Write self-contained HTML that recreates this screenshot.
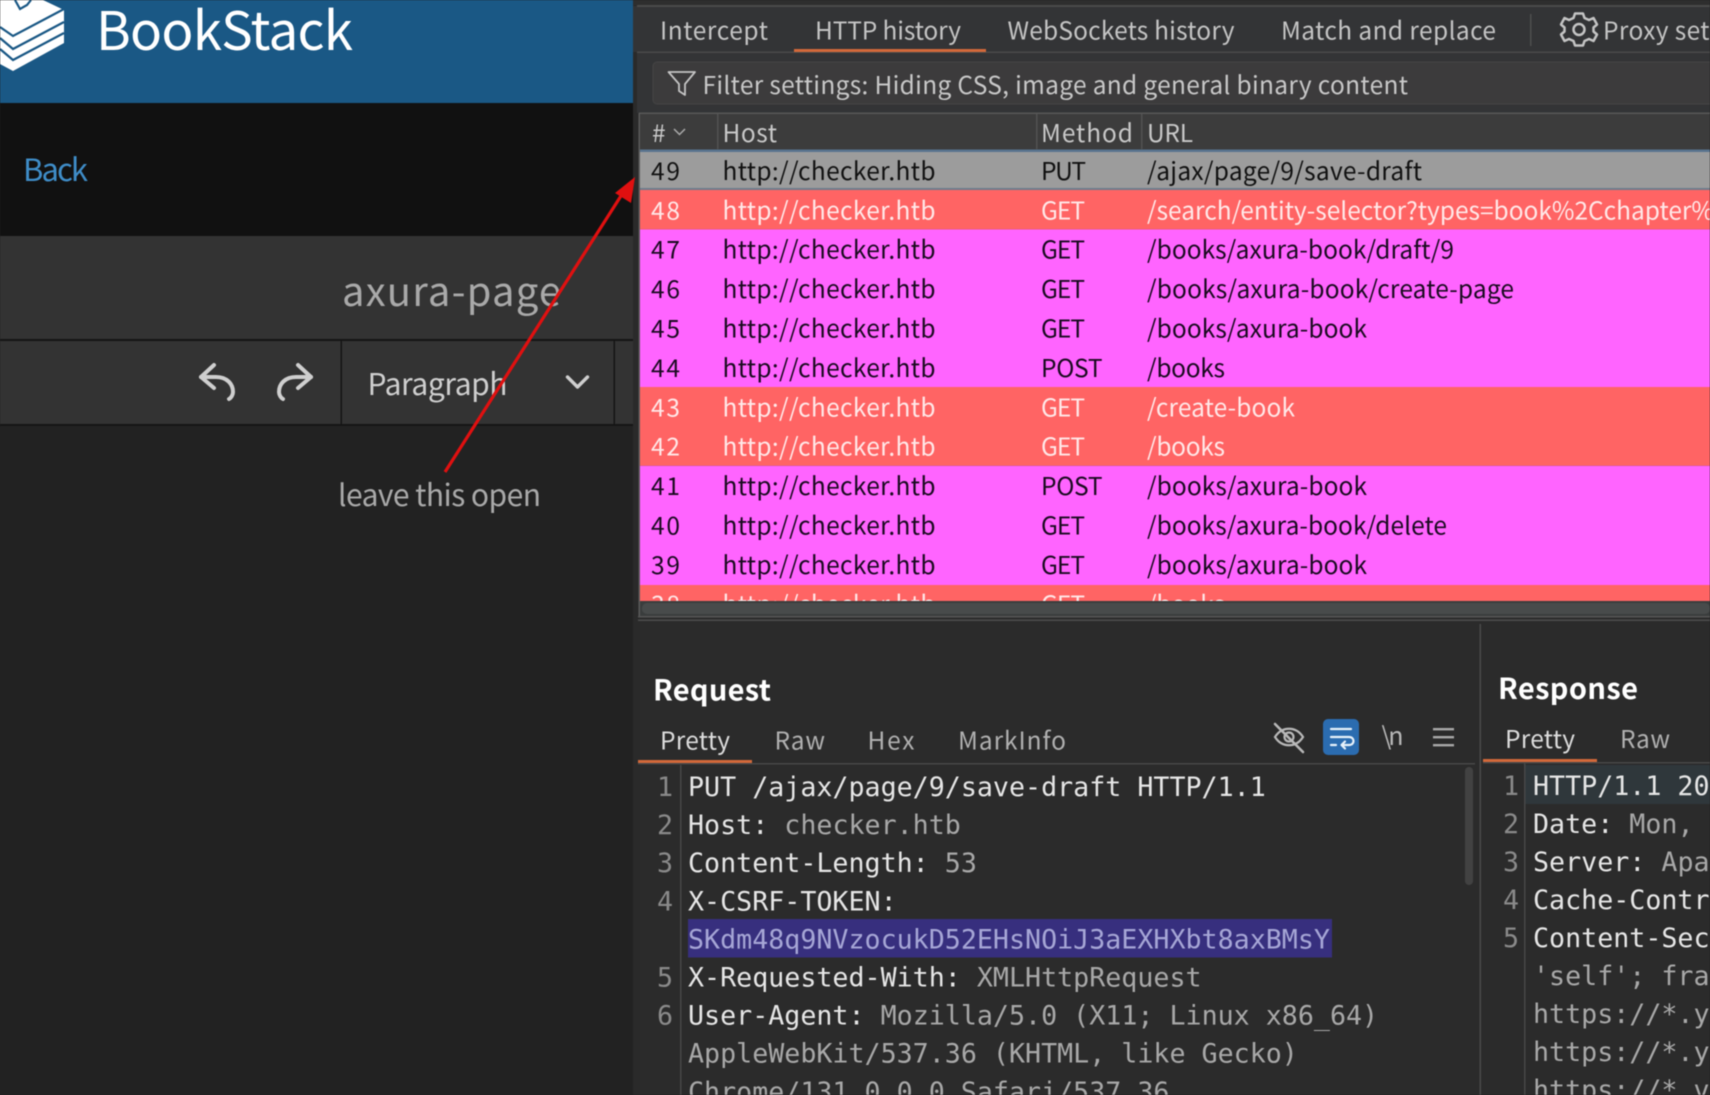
<!DOCTYPE html>
<html><head><meta charset="utf-8">
<style>
html,body{margin:0;padding:0;background:#222;width:1710px;height:1095px;overflow:hidden}
svg{display:block;filter:blur(.6px)}
text{font-family:"Noto Sans CJK SC","Liberation Sans",sans-serif;font-size:24.5px}
.m text,text.m{font-family:"DejaVu Sans Mono","Liberation Mono",monospace;font-size:26.67px}
.k{fill:#e6e6e6}.v{fill:#a8a8a8}.n{fill:#8a8a8a}
.b text{fill:#1a0a20}.w text{fill:#ffe8e8}
</style></head><body>
<svg width="1710" height="1095" viewBox="0 0 1710 1095" xmlns="http://www.w3.org/2000/svg">
<defs><clipPath id="c38"><rect x="640" y="584" width="1070" height="17"/></clipPath></defs>

<!-- left panel -->
<rect x="0" y="0" width="633" height="103" fill="#1a5885"/>
<rect x="0" y="103" width="633" height="133" fill="#111"/>
<rect x="0" y="236" width="633" height="103" fill="#333"/>
<rect x="0" y="339" width="633" height="2" fill="#151515"/>
<rect x="0" y="341" width="633" height="83" fill="#333"/>
<rect x="0" y="424" width="633" height="2" fill="#151515"/>
<rect x="0" y="426" width="633" height="669" fill="#222"/>
<rect x="340.500" y="341" width="1.500" height="83" fill="#151515"/>
<rect x="613.500" y="341" width="1.500" height="83" fill="#151515"/>

<!-- logo -->
<polygon points="0,0 43,0 64,10 64,43 13,71 0,64" fill="#fff"/>
<g fill="none" stroke="#1a5885" stroke-width="2.200">
<polyline points="0,27 13,36 64,9"/>
<polyline points="0,38 13,49 64,22"/>
<polyline points="0,49 13,60 64,33"/>
<polyline points="15,0 20,9 27,5 31,0"/>
</g>
<text x="96" y="50" textLength="257" style="font-size:53px" fill="#fff">BookStack</text>

<text x="23" y="181" textLength="65" style="font-size:31px" fill="#3f8dc8">Back</text>
<text x="342" y="306" textLength="219" style="font-size:40px" fill="#a9a9a9">axura-page</text>
<text x="367.500" y="395" textLength="140" style="font-size:30px" fill="#cfcfcf">Paragraph</text>
<text x="338" y="506" textLength="203" style="font-size:30px" fill="#a9a9a9">leave this open</text>

<!-- undo / redo / chevron -->
<g fill="none" stroke="#cfcfcf" stroke-width="4" stroke-linecap="round" stroke-linejoin="round">
<path d="M214 365 L201 377 L214 388"/>
<path d="M201 377 H216 C227 377 233 384 233 392 C233 395 231 398 229 399"/>
<path d="M298 365 L311 377 L298 388"/>
<path d="M311 377 H296 C285 377 279 384 279 392 C279 395 281 398 283 399"/>
<path d="M567.500 377 L577.500 387 L587.500 377" stroke-width="3.400"/>
</g>

<!-- right panel base -->
<rect x="633" y="0" width="1077" height="1095" fill="#2b2b2b"/>
<rect x="633" y="0" width="7" height="1095" fill="#2a2a2a"/>
<rect x="633" y="6" width="1077" height="46" fill="#333436"/>
<rect x="633" y="0" width="1077" height="5" fill="#2e2e2e"/>
<rect x="637" y="5" width="1073" height="2" fill="#4a4a4a"/>
<rect x="637" y="51.500" width="1073" height="2" fill="#4a4a4a"/>
<rect x="637" y="53" width="1073" height="60" fill="#333436"/>

<text x="660" y="39.500" textLength="108" fill="#c4c4c4">Intercept</text>
<text x="815" y="39.500" textLength="146" fill="#c4c4c4">HTTP history</text>
<text x="1007.500" y="39.500" textLength="227" fill="#c4c4c4">WebSockets history</text>
<text x="1281" y="39.500" textLength="215" fill="#c4c4c4">Match and replace</text>
<rect x="794" y="49" width="192" height="3" fill="#d2683a"/>
<rect x="1530" y="14" width="1.500" height="32" fill="#4e4e4e"/>
<!-- gear -->
<g fill="none" stroke="#c4c4c4" stroke-width="2.500" stroke-linejoin="round">
<path d="M1575 13.500 H1583 L1584.500 18 L1589 20 L1593.500 18 L1597 24.500 L1593.500 27.500 V31.500 L1597 34.500 L1593.500 41 L1589 39 L1584.500 41 L1583 45.500 H1575 L1573.500 41 L1569 39 L1564.500 41 L1561 34.500 L1564.500 31.500 V27.500 L1561 24.500 L1564.500 18 L1569 20 L1573.500 18 Z"/>
<circle cx="1579" cy="29.500" r="5.500"/>
</g>
<text x="1603" y="39.500" textLength="164" fill="#c4c4c4">Proxy settings</text>

<!-- filter -->
<rect x="653" y="62" width="1060" height="42" rx="4" fill="#3c3b3c" stroke="#454545"/>
<path d="M668.500 72 H695 L685 84 V95 L679 91 V84 Z" fill="none" stroke="#c4c4c4" stroke-width="1.800" stroke-linejoin="round"/>
<text x="702.500" y="94" textLength="705.500" fill="#c8c8c8">Filter settings: Hiding CSS, image and general binary content</text>

<!-- table header -->
<rect x="639" y="112.500" width="1071" height="37" fill="#3c3c3c"/>
<rect x="639" y="112.500" width="1071" height="1.500" fill="#575757"/>
<rect x="717" y="114" width="1.500" height="35" fill="#525252"/>
<rect x="1036" y="114" width="1.500" height="35" fill="#525252"/>
<rect x="1141" y="114" width="1.500" height="35" fill="#525252"/>
<text x="652" y="142" textLength="15" fill="#c8c8c8">#</text>
<path d="M674 129 L679.500 134.500 L685 129" fill="none" stroke="#aaa" stroke-width="1.500"/>
<text x="722.500" y="142" textLength="54.500" fill="#c8c8c8">Host</text>
<text x="1041" y="142" textLength="92" fill="#c8c8c8">Method</text>
<text x="1147" y="142" textLength="46" fill="#c8c8c8">URL</text>

<!-- rows -->
<rect x="640" y="149.500" width="1070" height="2.500" fill="#59748f"/>
<rect x="640" y="152" width="1070" height="36" fill="#9c9c9c"/>
<rect x="640" y="188" width="1070" height="2" fill="#6e7c8c"/>
<rect x="640" y="190" width="1070" height="39.400" fill="#ff6464"/>
<rect x="640" y="229.400" width="1070" height="157.600" fill="#ff64ff"/>
<rect x="640" y="387" width="1070" height="78.800" fill="#ff6464"/>
<rect x="640" y="465.800" width="1070" height="119.200" fill="#ff64ff"/>
<rect x="640" y="585" width="1070" height="16" fill="#ff6464"/>

<g fill="#111">
<text x="651" y="180" textLength="29">49</text><text x="722.500" y="180" textLength="213">http://checker.htb</text><text x="1041" y="180" textLength="45">PUT</text><text x="1147" y="180" textLength="275">/ajax/page/9/save-draft</text>
</g>
<g class="w">
<text x="651" y="219.300" textLength="29">48</text><text x="722.500" y="219.300" textLength="213">http://checker.htb</text><text x="1041" y="219.300" textLength="44">GET</text><text x="1147" y="219.300" textLength="567">/search/entity-selector?types=book%2Cchapter%</text>
</g>
<g class="b">
<text x="651" y="258.700" textLength="29">47</text><text x="722.500" y="258.700" textLength="213">http://checker.htb</text><text x="1041" y="258.700" textLength="44">GET</text><text x="1147" y="258.700" textLength="307">/books/axura-book/draft/9</text>
<text x="651" y="298.100" textLength="29">46</text><text x="722.500" y="298.100" textLength="213">http://checker.htb</text><text x="1041" y="298.100" textLength="44">GET</text><text x="1147" y="298.100" textLength="367">/books/axura-book/create-page</text>
<text x="651" y="337.500" textLength="29">45</text><text x="722.500" y="337.500" textLength="213">http://checker.htb</text><text x="1041" y="337.500" textLength="44">GET</text><text x="1147" y="337.500" textLength="220">/books/axura-book</text>
<text x="651" y="376.900" textLength="29">44</text><text x="722.500" y="376.900" textLength="213">http://checker.htb</text><text x="1041" y="376.900" textLength="61.500">POST</text><text x="1147" y="376.900" textLength="78">/books</text>
</g>
<g class="w">
<text x="651" y="416.300" textLength="29">43</text><text x="722.500" y="416.300" textLength="213">http://checker.htb</text><text x="1041" y="416.300" textLength="44">GET</text><text x="1147" y="416.300" textLength="148">/create-book</text>
<text x="651" y="455.700" textLength="29">42</text><text x="722.500" y="455.700" textLength="213">http://checker.htb</text><text x="1041" y="455.700" textLength="44">GET</text><text x="1147" y="455.700" textLength="78">/books</text>
</g>
<g class="b">
<text x="651" y="495.100" textLength="29">41</text><text x="722.500" y="495.100" textLength="213">http://checker.htb</text><text x="1041" y="495.100" textLength="61.500">POST</text><text x="1147" y="495.100" textLength="220">/books/axura-book</text>
<text x="651" y="534.500" textLength="29">40</text><text x="722.500" y="534.500" textLength="213">http://checker.htb</text><text x="1041" y="534.500" textLength="44">GET</text><text x="1147" y="534.500" textLength="300">/books/axura-book/delete</text>
<text x="651" y="573.900" textLength="29">39</text><text x="722.500" y="573.900" textLength="213">http://checker.htb</text><text x="1041" y="573.900" textLength="44">GET</text><text x="1147" y="573.900" textLength="220">/books/axura-book</text>
</g>
<g class="w" clip-path="url(#c38)">
<text x="651" y="613.300" textLength="29">38</text><text x="722.500" y="613.300" textLength="213">http://checker.htb</text><text x="1041" y="613.300" textLength="44">GET</text><text x="1147" y="613.300" textLength="78">/books</text>
</g>

<!-- table bottom scrollbar -->
<rect x="640" y="601" width="1070" height="15" fill="#3a3d3d"/>
<rect x="642" y="603" width="1068" height="11" rx="5" fill="#484b4b"/>
<rect x="638.500" y="113" width="1.500" height="504" fill="#5a5a5a"/>
<rect x="638" y="616" width="1072" height="1.500" fill="#555"/>
<rect x="638" y="619.500" width="1072" height="1.500" fill="#4c4c4c"/>

<!-- request header -->
<rect x="1479.500" y="624" width="1.500" height="471" fill="#4a4a4a"/>
<text x="653" y="700.500" textLength="118" style="font-size:29px;font-weight:700" fill="#fff">Request</text>
<text x="660" y="749.500" textLength="70" fill="#dcdcdc">Pretty</text>
<text x="774.500" y="749.500" textLength="50.500" fill="#b0b0b0">Raw</text>
<text x="867.500" y="749.500" textLength="47" fill="#b0b0b0">Hex</text>
<text x="958" y="749.500" textLength="108" fill="#b0b0b0">MarkInfo</text>
<rect x="638" y="760" width="114" height="3" fill="#d2683a"/>
<rect x="638" y="763" width="837" height="1.500" fill="#474747"/>

<!-- icons -->
<g fill="none" stroke="#b8b8b8" stroke-width="2.200" stroke-linecap="round">
<path d="M1275 737 C1282 726 1296 726 1303 737 C1296 748 1282 748 1275 737 Z"/>
<circle cx="1289" cy="737" r="4.500"/>
<path d="M1275 724 L1303 752" stroke-width="2.600"/>
</g>
<rect x="1323" y="719" width="36" height="36" rx="5" fill="#2b6cb0"/>
<g fill="none" stroke="#e8f2fb" stroke-width="2.200" stroke-linecap="round" stroke-linejoin="round">
<path d="M1331 729 H1351"/>
<path d="M1331 737 H1349 C1355 737 1355 745 1349 745 H1342"/>
<path d="M1345 741.500 L1341.500 745 L1345 748.500"/>
<path d="M1331 745 H1336"/>
</g>
<text x="1381.500" y="745" textLength="22" fill="#b8b8b8" style="font-size:25px">\n</text>
<g fill="#a8a8a8"><rect x="1433" y="728" width="21" height="2.400"/><rect x="1433" y="736" width="21" height="2.400"/><rect x="1433" y="744" width="21" height="2.400"/></g>

<!-- request editor -->
<rect x="680" y="765" width="1.500" height="330" fill="#474747"/>
<rect x="1465" y="767" width="8" height="118" rx="4" fill="#424242"/>
<rect x="688" y="919" width="644" height="38.500" fill="#372f7e"/>
<g class="m">
<text class="n" x="657" y="796">1</text>
<text class="n" x="657" y="834">2</text>
<text class="n" x="657" y="872.200">3</text>
<text class="n" x="657" y="910.300">4</text>
<text class="n" x="657" y="986.500">5</text>
<text class="n" x="657" y="1024.600">6</text>
<text class="k" x="688" y="796">PUT /ajax/page/9/save-draft HTTP/1.1</text>
<text x="688" y="834"><tspan class="k">Host:</tspan><tspan class="v"> checker.htb</tspan></text>
<text x="688" y="872.200"><tspan class="k">Content-Length:</tspan><tspan class="v"> 53</tspan></text>
<text class="k" x="688" y="910.300">X-CSRF-TOKEN:</text>
<text x="688" y="948.400" fill="#a6a6d6">SKdm48q9NVzocukD52EHsNOiJ3aEXHXbt8axBMsY</text>
<text x="688" y="986.500"><tspan class="k">X-Requested-With:</tspan><tspan class="v"> XMLHttpRequest</tspan></text>
<text x="688" y="1024.600"><tspan class="k">User-Agent:</tspan><tspan class="v"> Mozilla/5.0 (X11; Linux x86_64)</tspan></text>
<text class="v" x="688" y="1062.700">AppleWebKit/537.36 (KHTML, like Gecko)</text>
<text class="v" x="688" y="1100.800">Chrome/131.0.0.0 Safari/537.36</text>
</g>

<!-- response -->
<text x="1498" y="699" textLength="140" style="font-size:29px;font-weight:700" fill="#fff">Response</text>
<text x="1505" y="748" textLength="70" fill="#dcdcdc">Pretty</text>
<text x="1620" y="748" textLength="50" fill="#b0b0b0">Raw</text>
<rect x="1483" y="759" width="114" height="3" fill="#d2683a"/>
<rect x="1483" y="762" width="227" height="1.500" fill="#474747"/>
<rect x="1525" y="765" width="185" height="39" fill="#2f373b"/>
<rect x="1524" y="763" width="1.500" height="332" fill="#474747"/>
<g class="m">
<text class="n" x="1503" y="795">1</text>
<text class="n" x="1503" y="833">2</text>
<text class="n" x="1503" y="871">3</text>
<text class="n" x="1503" y="909">4</text>
<text class="n" x="1503" y="947">5</text>
<text class="k" x="1533" y="795">HTTP/1.1 200 OK</text>
<text x="1533" y="833"><tspan class="k">Date:</tspan><tspan class="v"> Mon, 24 Feb</tspan></text>
<text x="1533" y="871"><tspan class="k">Server:</tspan><tspan class="v"> Apache</tspan></text>
<text class="k" x="1533" y="909">Cache-Control:</text>
<text class="k" x="1533" y="947">Content-Security</text>
<text class="v" x="1533" y="985">'self'; frame-ancestors</text>
<text class="v" x="1533" y="1023">https://*.youtube.com</text>
<text class="v" x="1533" y="1061">https://*.youtube.com</text>
<text class="v" x="1533" y="1099">https://*.vimeo.com</text>
</g>

<!-- annotation arrow -->
<path d="M445 472 L626 188" stroke="#e01010" stroke-width="3.200" fill="none"/>
<polygon points="635,177 631,203 615,193" fill="#e01010"/>
</svg>
</body></html>
